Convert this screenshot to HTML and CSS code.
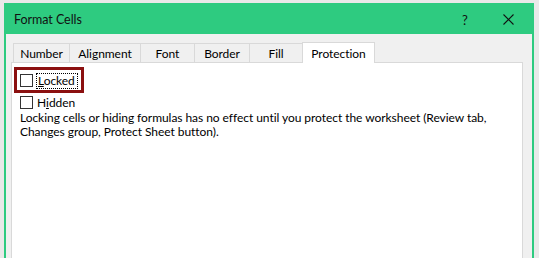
FILE: index.html
```html
<!DOCTYPE html>
<html lang="en">
<head>
<meta charset="UTF-8">
<meta name="viewport" content="width=device-width, initial-scale=1.0">
<title>Format Cells</title>
<link rel="stylesheet" href="styles.css">
</head>
<body>

<div class="dialog">
    <div class="title-bar">
        <span class="title">Format Cells</span>
        <span class="help">?</span>
        <span class="close">
            <svg width="11" height="11" viewBox="0 0 11 11">
                <path d="M0.5 0.5 L10.5 10.5 M10.5 0.5 L0.5 10.5" stroke="#111" stroke-width="1.1" fill="none"/>
            </svg>
        </span>
    </div>

    <div class="dialog-body">
        <div class="tabs">
            <div class="tab tab-number">Number</div>
            <div class="tab tab-alignment">Alignment</div>
            <div class="tab tab-font">Font</div>
            <div class="tab tab-border">Border</div>
            <div class="tab tab-fill">Fill</div>
            <div class="tab tab-protection active">Protection</div>
        </div>

        <div class="panel">
            <div class="highlight">
                <label class="check">
                    <span class="box"></span>
                    <span class="focus"><u>L</u>ocked</span>
                </label>
            </div>
            <label class="check check-hidden">
                <span class="box"></span>
                <span>H<u>i</u>dden</span>
            </label>
            <p class="note">Locking cells or hiding formulas has no effect until you protect the worksheet (Review tab,<br>Changes group, Protect Sheet button).</p>
        </div>
    </div>
</div>

</body>
</html>
```

FILE: styles.css
```css
body {
    margin: 0;
    padding: 3px 0 0 4px;
    background-color: #e9e9e9;
    font-family: Lato, "Noto Sans", sans-serif;
    font-size: 12px;
    letter-spacing: -0.05px;
    color: #000;
    height: 258px;
    overflow: hidden;
    box-sizing: border-box;
}
.dialog {
    width: 530px;
    height: 260px;
    border: 2px solid #2ecb80;
    border-top: none;
    border-bottom: none;
    background-color: #f0f0f0;
    box-sizing: border-box;
}
.title-bar {
    height: 31px;
    margin: 0 -2px;
    background-color: #2ecb80;
    display: flex;
    align-items: center;
    padding: 2px 0 0 10px;
    box-sizing: border-box;
}
.title {
    flex: 1;
    font-size: 12.5px;
    color: #111;
}
.help {
    width: 20px;
    font-size: 13px;
    color: #111;
    margin-right: 21px;
}
.close {
    width: 31px;
    display: flex;
    align-items: center;
}
.dialog-body {
    padding: 9px 9px 0 5px;
}
.tabs {
    display: flex;
    padding-left: 2px;
    height: 19px;
    align-items: flex-end;
}
.tab {
    height: 19px;
    border: 1px solid #d9d9d9;
    border-right: none;
    border-bottom: none;
    box-sizing: border-box;
    text-align: center;
    line-height: 19px;
    color: #000;
}
.tab-number { width: 56px; }
.tab-alignment { width: 71px; }
.tab-font { width: 54px; }
.tab-border { width: 55px; }
.tab-fill { width: 53px; }
.tab.active {
    width: 73px;
    height: 21px;
    margin-bottom: -1px;
    background-color: #fff;
    border-right: 1px solid #d9d9d9;
    line-height: 21px;
    position: relative;
}
.panel {
    height: 200px;
    background-color: #fff;
    border: 1px solid #d9d9d9;
    padding: 4px 0 0 2px;
}
.highlight {
    display: inline-block;
    border: 3px solid #8b1010;
    padding: 3px 4px 2px 3px;
}
.check {
    display: flex;
    align-items: center;
    height: 15px;
}
.box {
    width: 11px;
    height: 11px;
    border: 1px solid #333;
    background-color: #fff;
    margin-right: 4px;
}
.focus {
    outline: 1px dotted #000;
    padding: 0 2px 0 1px;
    line-height: 14px;
}
.check-hidden {
    margin: 2px 0 0 6px;
}
.note {
    margin: 1px 0 0 6px;
    line-height: 14px;
    white-space: nowrap;
}
```
